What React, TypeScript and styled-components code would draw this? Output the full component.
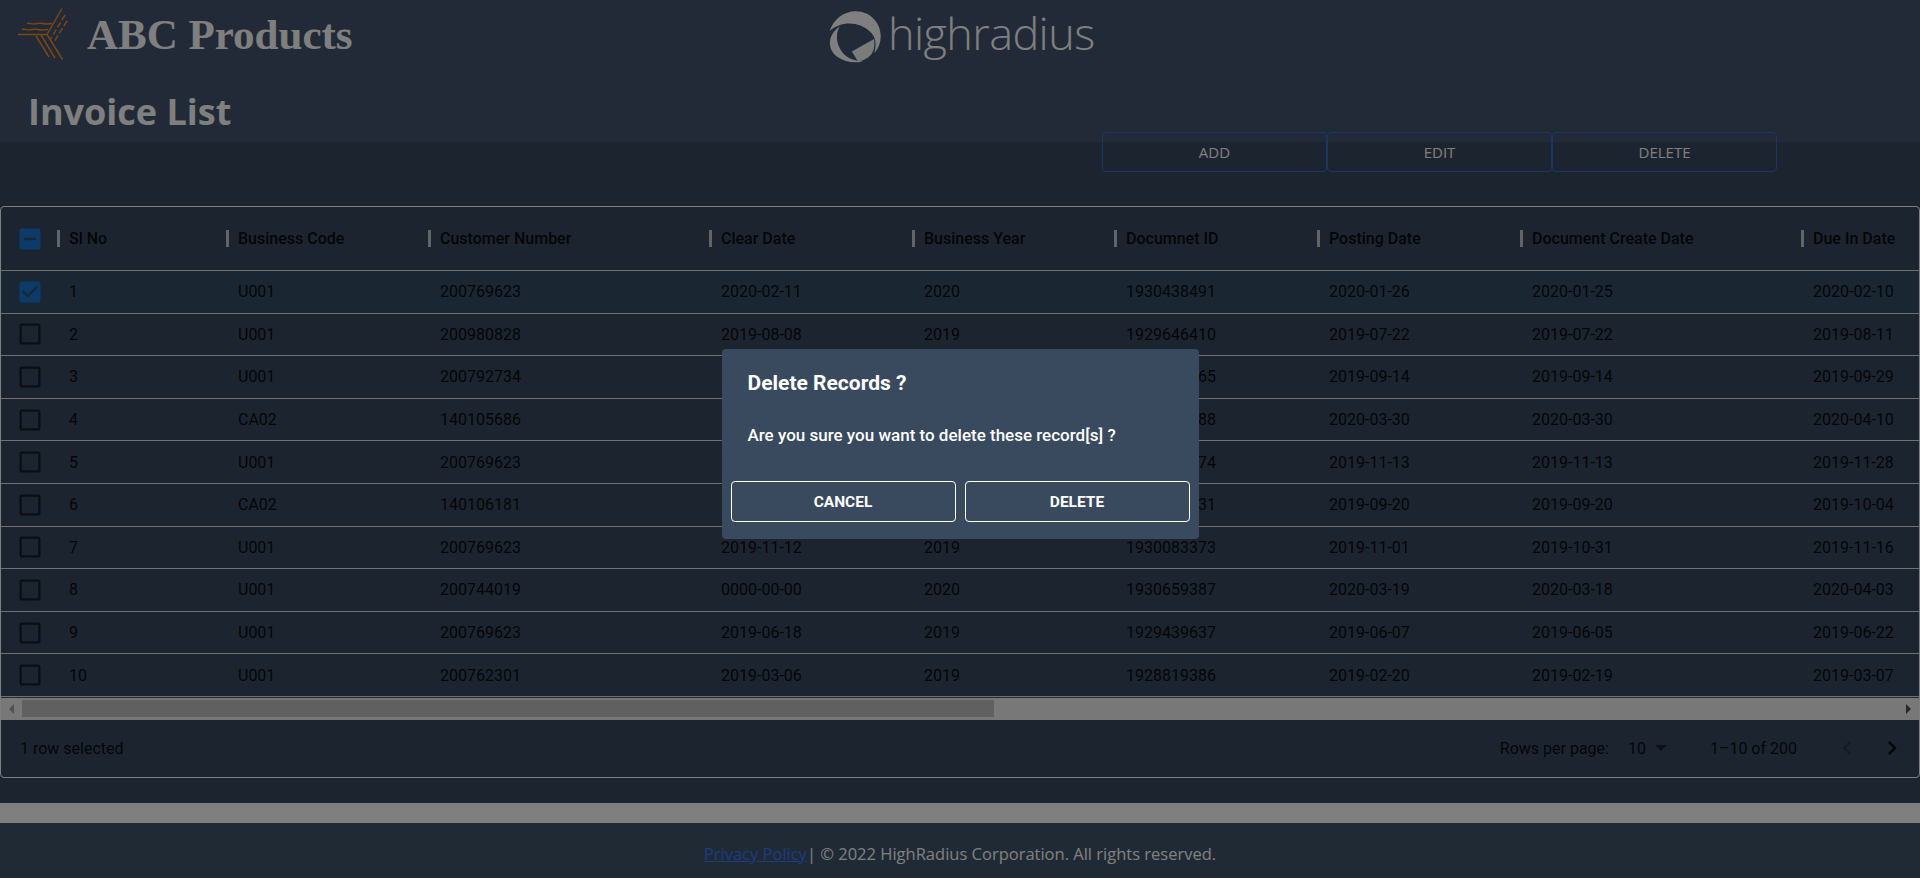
import React from 'react';
import styled, { createGlobalStyle } from 'styled-components';

const columns = [169, 202, 281, 203, 202, 203, 203, 281, 203];

const GlobalStyle = createGlobalStyle`
  html,
  body,
  #root {
    height: 100%;
    margin: 0;
  }

  body {
    overflow: hidden;
    background: #39495e;
    font-family: Roboto, "Liberation Sans", sans-serif;
  }
`;

const Root = styled.div`
  display: flex;
  flex-direction: column;
  height: 878px;
  background: #39495e;
`;

const Header = styled.header`
  height: 142px;
  flex-shrink: 0;
  background: #43556c;
`;

const BrandRow = styled.div`
  display: grid;
  grid-template-columns: 1fr 264px 1fr;
  height: 72px;
  padding-top: 7px;
  box-sizing: border-box;
`;

const Brand = styled.div`
  display: flex;
  align-items: flex-start;
  padding-left: 18px;
`;

const BrandName = styled.h1`
  margin: 6px 0 0 17px;
  font: bold 43px/1 "Liberation Serif", serif;
  color: #fff;
  white-space: nowrap;
`;

const Logo = styled.div`
  display: flex;
  align-items: flex-start;
  margin-top: 2px;
`;

const LogoText = styled.span`
  margin: -3px 0 0 6px;
  font: 300 45px/1.2 "Open Sans", sans-serif;
  letter-spacing: -0.6px;
  color: #fff;
`;

const Title = styled.h2`
  margin: 22px 0 0 28px;
  font: bold 36px/1 "Open Sans", sans-serif;
  color: #fff;
`;

const Toolbar = styled.div`
  display: flex;
  justify-content: flex-end;
  margin-top: -10px;
  padding-right: 143px;
`;

const ToolButton = styled.button`
  width: 225px;
  height: 40px;
  padding: 0;
  border: 1px solid #386acc;
  border-radius: 4px;
  background: transparent;
  color: #fff;
  font: 15px "Open Sans", sans-serif;
`;

const Grid = styled.div`
  margin-top: 34px;
  height: 572px;
  flex-shrink: 0;
  box-sizing: border-box;
  display: flex;
  flex-direction: column;
  border: 1px solid #fff;
  border-radius: 4px;
  overflow: hidden;
  color: rgba(0, 0, 0, 0.87);
  font-size: 16px;
`;

const GridRow = styled.div<{ $selected?: boolean; $head?: boolean }>`
  display: grid;
  grid-template-columns: 56px ${columns.map((w) => `${w}px`).join(' ')};
  align-items: center;
  width: max-content;
  min-width: 100%;
  height: ${(props) => (props.$head ? '64px' : '42.6px')};
  flex-shrink: 0;
  box-sizing: border-box;
  border-bottom: 1px solid #e0e0e0;
  background: ${(props) => (props.$selected ? 'rgba(25, 118, 210, 0.08)' : 'transparent')};
  font-weight: ${(props) => (props.$head ? 500 : 400)};
`;

const BoxCell = styled.div`
  display: flex;
  padding-left: 15px;
`;

const Box = styled.svg<{ $on?: boolean }>`
  width: 28px;
  height: 28px;
  display: block;
  fill: ${(props) => (props.$on ? '#1976d2' : 'rgba(0, 0, 0, 0.6)')};
`;

const HeadCell = styled.div`
  display: flex;
  align-items: center;
  gap: 9px;
`;

const Separator = styled.span`
  width: 3px;
  height: 17px;
  background: #c8c8c8;
  flex-shrink: 0;
`;

const Cell = styled.div`
  padding-left: 12px;
  white-space: nowrap;
`;

const ScrollBar = styled.div`
  display: flex;
  align-items: center;
  height: 23px;
  flex-shrink: 0;
  box-sizing: border-box;
  border-top: 1px solid #555;
  background: #f1f1f1;
`;

const ScrollArrow = styled.div<{ $dark?: boolean }>`
  width: 21px;
  display: flex;
  justify-content: center;
  color: ${(props) => (props.$dark ? '#505050' : '#a3a3a3')};
`;

const ScrollThumb = styled.div`
  width: 972px;
  height: 17px;
  background: #c1c1c1;
`;

const ScrollTrack = styled.div`
  flex: 1;
`;

const GridFooter = styled.div`
  flex: 1;
  display: flex;
  align-items: center;
  justify-content: space-between;
  padding: 0 13px 0 19px;
`;

const Pagination = styled.div`
  display: flex;
  align-items: center;
`;

const PageSize = styled.span`
  display: flex;
  align-items: center;
  margin-left: 19px;
`;

const Caret = styled.span`
  width: 0;
  height: 0;
  margin-left: 9px;
  border-left: 6px solid transparent;
  border-right: 6px solid transparent;
  border-top: 6px solid rgba(0, 0, 0, 0.54);
`;

const PageRange = styled.span`
  margin: 0 36px 0 43px;
`;

const PageIcon = styled.svg<{ $off?: boolean }>`
  width: 28px;
  height: 28px;
  margin-left: ${(props) => (props.$off ? '0' : '17px')};
  fill: ${(props) => (props.$off ? 'rgba(0, 0, 0, 0.26)' : 'rgba(0, 0, 0, 0.87)')};
`;

const Band = styled.div`
  height: 20px;
  margin-top: 25px;
  flex-shrink: 0;
  background: #fff;
`;

const Footer = styled.footer`
  flex: 1;
  display: flex;
  align-items: center;
  justify-content: center;
  padding-top: 5px;
  background: #3f5468;
  color: #fff;
  font: 16.5px "Open Sans", sans-serif;
`;

const PolicyLink = styled.a`
  color: #3f74ff;
  text-decoration: underline;
`;

const Backdrop = styled.div`
  position: fixed;
  inset: 0;
  display: flex;
  align-items: center;
  justify-content: center;
  padding-top: 10px;
  box-sizing: border-box;
  background: rgba(0, 0, 0, 0.5);
`;

const Dialog = styled.div`
  width: 477px;
  height: 190px;
  box-sizing: border-box;
  padding: 0 9px;
  display: flex;
  flex-direction: column;
  border-radius: 4px;
  background: #39495e;
  color: #fff;
`;

const DialogTitle = styled.h3`
  margin: 20px 0 0 17px;
  font: 700 21px/28px Roboto, sans-serif;
`;

const DialogText = styled.p`
  margin: 26px 0 0 17px;
  font: 500 17px/24px Roboto, sans-serif;
`;

const DialogActions = styled.div`
  display: flex;
  gap: 9px;
  margin-top: 34px;
`;

const DialogButton = styled.button`
  flex: 1;
  height: 41px;
  padding: 0;
  border: 1px solid #fff;
  border-radius: 4px;
  background: transparent;
  color: #fff;
  font: 700 15.5px Roboto, sans-serif;
  text-transform: uppercase;
`;

const Mark = styled.svg`
  display: block;
  fill: none;
  stroke: #f08c2c;
  stroke-width: 1.5;
`;

const Ring = styled.svg`
  display: block;
  flex-shrink: 0;
  fill: #fff;
`;

const headings = [
  'Sl No',
  'Business Code',
  'Customer Number',
  'Clear Date',
  'Business Year',
  'Documnet ID',
  'Posting Date',
  'Document Create Date',
  'Due In Date',
];

const rows = [
  ['1', 'U001', '200769623', '2020-02-11', '2020', '1930438491', '2020-01-26', '2020-01-25', '2020-02-10'],
  ['2', 'U001', '200980828', '2019-08-08', '2019', '1929646410', '2019-07-22', '2019-07-22', '2019-08-11'],
  ['3', 'U001', '200792734', '2019-09-30', '2019', '1929873765', '2019-09-14', '2019-09-14', '2019-09-29'],
  ['4', 'CA02', '140105686', '2020-04-10', '2020', '2960623488', '2020-03-30', '2020-03-30', '2020-04-10'],
  ['5', 'U001', '200769623', '2019-11-25', '2019', '1930147974', '2019-11-13', '2019-11-13', '2019-11-28'],
  ['6', 'CA02', '140106181', '2019-10-03', '2019', '2960581231', '2019-09-20', '2019-09-20', '2019-10-04'],
  ['7', 'U001', '200769623', '2019-11-12', '2019', '1930083373', '2019-11-01', '2019-10-31', '2019-11-16'],
  ['8', 'U001', '200744019', '0000-00-00', '2020', '1930659387', '2020-03-19', '2020-03-18', '2020-04-03'],
  ['9', 'U001', '200769623', '2019-06-18', '2019', '1929439637', '2019-06-07', '2019-06-05', '2019-06-22'],
  ['10', 'U001', '200762301', '2019-03-06', '2019', '1928819386', '2019-02-20', '2019-02-19', '2019-03-07'],
];

const CheckIcon = ({ kind }: { kind: 'empty' | 'checked' | 'partial' }) => {
  const paths = {
    empty: 'M19 5v14H5V5h14m0-2H5c-1.1 0-2 .9-2 2v14c0 1.1.9 2 2 2h14c1.1 0 2-.9 2-2V5c0-1.1-.9-2-2-2z',
    checked:
      'M19 3H5c-1.11 0-2 .9-2 2v14c0 1.1.89 2 2 2h14c1.11 0 2-.9 2-2V5c0-1.1-.89-2-2-2zm-9 14l-5-5 1.41-1.41L10 14.17l7.59-7.59L19 8l-9 9z',
    partial: 'M19 3H5c-1.1 0-2 .9-2 2v14c0 1.1.9 2 2 2h14c1.1 0 2-.9 2-2V5c0-1.1-.9-2-2-2zm-2 10H7v-2h10v2z',
  };
  return (
    <Box viewBox="0 0 24 24" $on={kind !== 'empty'}>
      <path d={paths[kind]} />
    </Box>
  );
};

const BrandMark = () => (
  <Mark width="52" height="54" viewBox="18 6 52 54">
    <path d="M18 33.5h29" />
    <path d="M22 28.5c3-1 5 1 8 .5s5-1.500 8-.5 6 .5 10 0" />
    <path d="M27 22.500c3-1 5 1 8 .5s5-1.500 8-.5 6 .5 9 0" />
    <path d="M62 7.500 47 33.500" />
    <path d="M65 14 50 39" strokeDasharray="6 2.500" />
    <path d="M67 20 54 41" strokeDasharray="6 2.500" />
    <path d="M36 35l13 21" />
    <path d="M41 34l14 23" />
    <path d="M47 33.500l15.500 25" />
  </Mark>
);

const RingMark = () => (
  <Ring width="54" height="56" viewBox="20 24 170 170">
    <path d="M25 90C38 52 70 28 108 28c44 0 78 36 78 78 0 20-6 38-20 54 8-30 4-52-14-68-34-34-92-34-127-2z" />
    <path d="M57 76C20 100 14 146 50 172c22 16 52 20 80 14-34-2-58-14-72-40-12-22-14-48-1-70z" />
    <path d="M95 155l70-40c4 24-2 46-18 58-12 8-22 12-32 14z" opacity="0.95" />
  </Ring>
);

const App = () => (
  <React.Fragment>
    <GlobalStyle />
    <Root>
      <Header>
        <BrandRow>
          <Brand>
            <BrandMark />
            <BrandName>ABC Products</BrandName>
          </Brand>
          <Logo>
            <RingMark />
            <LogoText>highradius</LogoText>
          </Logo>
        </BrandRow>
        <Title>Invoice List</Title>
      </Header>
      <Toolbar>
        <ToolButton>ADD</ToolButton>
        <ToolButton>EDIT</ToolButton>
        <ToolButton>DELETE</ToolButton>
      </Toolbar>
      <Grid>
        <GridRow $head>
          <BoxCell>
            <CheckIcon kind="partial" />
          </BoxCell>
          {headings.map((heading) => (
            <HeadCell key={heading}>
              <Separator />
              {heading}
            </HeadCell>
          ))}
        </GridRow>
        {rows.map((row, index) => (
          <GridRow key={row[0]} $selected={index === 0}>
            <BoxCell>
              <CheckIcon kind={index === 0 ? 'checked' : 'empty'} />
            </BoxCell>
            {row.map((value, column) => (
              <Cell key={column}>{value}</Cell>
            ))}
          </GridRow>
        ))}
        <ScrollBar>
          <ScrollArrow>
            <svg width="6" height="10" viewBox="0 0 6 10" fill="currentColor">
              <path d="M5 0v10L0 5z" />
            </svg>
          </ScrollArrow>
          <ScrollThumb />
          <ScrollTrack />
          <ScrollArrow $dark>
            <svg width="6" height="10" viewBox="0 0 6 10" fill="currentColor">
              <path d="M0 0v10l5-5z" />
            </svg>
          </ScrollArrow>
        </ScrollBar>
        <GridFooter>
          <span>1 row selected</span>
          <Pagination>
            <span>Rows per page:</span>
            <PageSize>
              10
              <Caret />
            </PageSize>
            <PageRange>1–10 of 200</PageRange>
            <PageIcon viewBox="0 0 24 24" $off>
              <path d="M15.41 7.41 14 6l-6 6 6 6 1.41-1.41L10.83 12z" />
            </PageIcon>
            <PageIcon viewBox="0 0 24 24">
              <path d="M10 6 8.590 7.410 13.170 12l-4.580 4.590L10 18l6-6z" />
            </PageIcon>
          </Pagination>
        </GridFooter>
      </Grid>
      <Band />
      <Footer>
        <PolicyLink href="#">Privacy Policy</PolicyLink>| © 2022 HighRadius Corporation. All rights reserved.
      </Footer>
    </Root>
    <Backdrop>
      <Dialog>
        <DialogTitle>Delete Records ?</DialogTitle>
        <DialogText>Are you sure you want to delete these record[s] ?</DialogText>
        <DialogActions>
          <DialogButton>Cancel</DialogButton>
          <DialogButton>Delete</DialogButton>
        </DialogActions>
      </Dialog>
    </Backdrop>
  </React.Fragment>
);

export default App;
